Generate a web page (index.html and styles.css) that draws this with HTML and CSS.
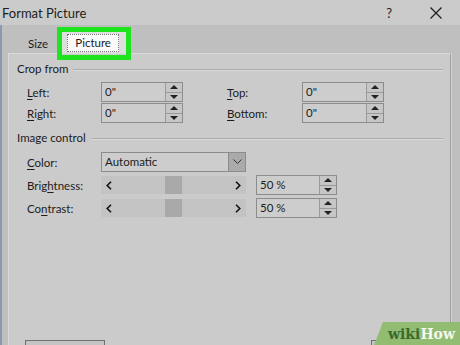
FILE: index.html
```html
<!DOCTYPE html>
<html>
<head>
  <title>Format Picture</title>
  <link rel="stylesheet" href="styles.css">
</head>
<body>
  <div class="titlebar">
    <span class="title-text">Format Picture</span>
    <span class="help">?</span>
    <svg class="close" width="12" height="12" viewBox="0 0 12 12">
      <path d="M0.5 0.5 L11.5 11.5 M11.5 0.5 L0.5 11.5" stroke="#1c1c1c" stroke-width="1.2" fill="none"/>
    </svg>
  </div>

  <div class="frame">
    <div class="tabs">
      <span class="tab">Size</span>
      <span class="tab tab-active"><span class="tab-face">Picture</span></span>
    </div>

    <div class="panel">
      <div class="legend"><span>Crop from</span></div>
      <div class="crop-grid">
        <label><u>L</u>eft:</label>
        <div class="field"><span class="value">0"</span><span class="spin"><i class="up"></i><i class="down"></i></span></div>
        <span></span>
        <label><u>T</u>op:</label>
        <div class="field"><span class="value">0"</span><span class="spin"><i class="up"></i><i class="down"></i></span></div>

        <label><u>R</u>ight:</label>
        <div class="field"><span class="value">0"</span><span class="spin"><i class="up"></i><i class="down"></i></span></div>
        <span></span>
        <label><u>B</u>ottom:</label>
        <div class="field"><span class="value">0"</span><span class="spin"><i class="up"></i><i class="down"></i></span></div>
      </div>

      <div class="legend legend-image"><span>Image control</span></div>
      <div class="control-grid">
        <label><u>C</u>olor:</label>
        <div class="select">
          <span class="value">Automatic</span>
          <span class="select-btn">
            <svg width="9" height="6" viewBox="0 0 9 6"><path d="M0.5 0.5 L4.5 4.5 L8.5 0.5" stroke="#333" stroke-width="1" fill="none"/></svg>
          </span>
        </div>
        <span></span>

        <label>Brig<u>h</u>tness:</label>
        <div class="slider">
          <svg width="6" height="9" viewBox="0 0 6 9"><path d="M5 0.8 L1.2 4.5 L5 8.2" stroke="#111" stroke-width="1.6" fill="none"/></svg>
          <span class="thumb"></span>
          <svg width="6" height="9" viewBox="0 0 6 9"><path d="M1 0.8 L4.8 4.5 L1 8.2" stroke="#111" stroke-width="1.6" fill="none"/></svg>
        </div>
        <div class="field"><span class="value">50 %</span><span class="spin"><i class="up"></i><i class="down"></i></span></div>

        <label>Co<u>n</u>trast:</label>
        <div class="slider">
          <svg width="6" height="9" viewBox="0 0 6 9"><path d="M5 0.8 L1.2 4.5 L5 8.2" stroke="#111" stroke-width="1.6" fill="none"/></svg>
          <span class="thumb"></span>
          <svg width="6" height="9" viewBox="0 0 6 9"><path d="M1 0.8 L4.8 4.5 L1 8.2" stroke="#111" stroke-width="1.6" fill="none"/></svg>
        </div>
        <div class="field"><span class="value">50 %</span><span class="spin"><i class="up"></i><i class="down"></i></span></div>
      </div>

      <div class="footer">
        <button class="btn"></button>
        <button class="btn btn-right"></button>
      </div>
    </div>
  </div>

  <!-- highlight drawn round the Picture tab -->
  <div class="highlight"></div>

  <div class="wikihow"><span class="wiki">wiki</span><span class="how">How</span></div>
</body>
</html>
```

FILE: styles.css
```css
body {
  margin: 0;
  width: 460px;
  height: 345px;
  overflow: hidden;
  position: relative;
  background: #bfbfbf;
  font-family: Lato, "Noto Sans", sans-serif;
  font-size: 11.5px;
  color: #1c1c1c;
}

.titlebar {
  height: 25px;
  display: flex;
  align-items: center;
  padding-left: 2px;
  background: #cbcbcb;
}
.title-text {
  flex: 1;
  font-size: 13px;
}
.help {
  font-size: 13px;
  margin-right: 38px;
}
.close {
  margin-right: 18px;
}

.frame {
  height: 320px;
  border-left: 2px solid #8a9bb0;
  display: flex;
  flex-direction: column;
}

.tabs {
  height: 28px;
  display: flex;
  align-items: flex-end;
  padding-left: 26px;
}
.tab {
  padding-bottom: 2px;
  line-height: 14px;
  margin-right: 14px;
}
.tab-active {
  padding: 4px 7px 1px 5px;
  background: #dedede;
  margin-right: 0;
}
.tab-face {
  display: flex;
  align-items: center;
  justify-content: center;
  width: 52px;
  height: 18px;
  box-sizing: border-box;
  background: #fbfbfb;
  border: 1px dotted #777;
}

.panel {
  flex: 1;
  margin-left: 6px;
  width: 443px;
  box-sizing: border-box;
  background: #cbcbcb;
  border-top: 1px solid #dadada;
  border-left: 1px solid #dadada;
  border-right: 1px solid #9e9e9e;
  box-shadow: 1px 0 0 #d4d4d4;
  padding: 8px 7px 0 8px;
  display: flex;
  flex-direction: column;
}

.legend {
  display: flex;
  align-items: center;
  gap: 5px;
  height: 14px;
  line-height: 14px;
}
.legend::after {
  content: "";
  flex: 1;
  height: 1px;
  background: #acacac;
  box-shadow: 0 1px 0 #dadada;
}
.legend-image {
  margin-top: 8px;
}

.crop-grid {
  margin-top: 6px;
  padding-left: 10px;
  display: grid;
  grid-template-columns: 74px 82px 44px 75px 82px;
  grid-auto-rows: 20px;
  row-gap: 1px;
  align-items: center;
}

.control-grid {
  margin-top: 7px;
  padding-left: 10px;
  display: grid;
  grid-template-columns: 74px 145px 91px;
  grid-auto-rows: 20px;
  row-gap: 3px;
  align-items: center;
}
.control-grid .field {
  margin-left: 10px;
}

label u {
  text-decoration-thickness: 1px;
  text-underline-offset: 2px;
}

.field,
.select {
  display: flex;
  height: 20px;
  box-sizing: border-box;
  border: 1px solid #8c8c8c;
  background: #cdcdcd;
}
.value {
  flex: 1;
  padding-left: 3px;
  line-height: 18px;
}

.spin {
  width: 16px;
  display: flex;
  flex-direction: column;
  border-left: 1px solid #9a9a9a;
  background: #c6c6c6;
}
.spin i {
  flex: 1;
  display: flex;
  align-items: center;
  justify-content: center;
}
.spin i + i {
  border-top: 1px solid #9a9a9a;
}
.spin .up::before {
  content: "";
  border-left: 4px solid transparent;
  border-right: 4px solid transparent;
  border-bottom: 4px solid #222;
}
.spin .down::before {
  content: "";
  border-left: 4px solid transparent;
  border-right: 4px solid transparent;
  border-top: 4px solid #222;
}

.select-btn {
  width: 16px;
  display: flex;
  align-items: center;
  justify-content: center;
  background: #aaaaaa;
  border-left: 1px solid #8c8c8c;
}

.slider {
  height: 18px;
  display: flex;
  align-items: center;
  justify-content: space-between;
  padding: 0 5px;
  background: #c3c3c3;
}
.thumb {
  width: 17px;
  height: 18px;
  background: #a9a9a9;
}

.footer {
  margin-top: auto;
  height: 5px;
  padding-left: 8px;
  display: flex;
  align-items: flex-start;
}
.btn {
  width: 80px;
  height: 22px;
  flex: none;
  margin: 0;
  border: 1px solid #707070;
  background: #c4c4c4;
}
.btn-right {
  margin-left: 266px;
}

.highlight {
  position: absolute;
  left: 57px;
  top: 27px;
  width: 74px;
  height: 33px;
  box-sizing: border-box;
  border: 5px solid #1ee41e;
}

.wikihow {
  position: absolute;
  right: 0;
  bottom: 0;
  width: 86px;
  height: 23px;
  box-sizing: border-box;
  padding: 4px 0 0 14px;
  background: #93bc73;
  clip-path: polygon(9px 0, 100% 0, 100% 100%, 0 100%);
  font-family: "DejaVu Serif", serif;
  font-weight: bold;
  font-size: 14px;
  line-height: 16px;
}
.wiki {
  color: #3d6a2c;
}
.how {
  color: #f4f8f0;
}
```
